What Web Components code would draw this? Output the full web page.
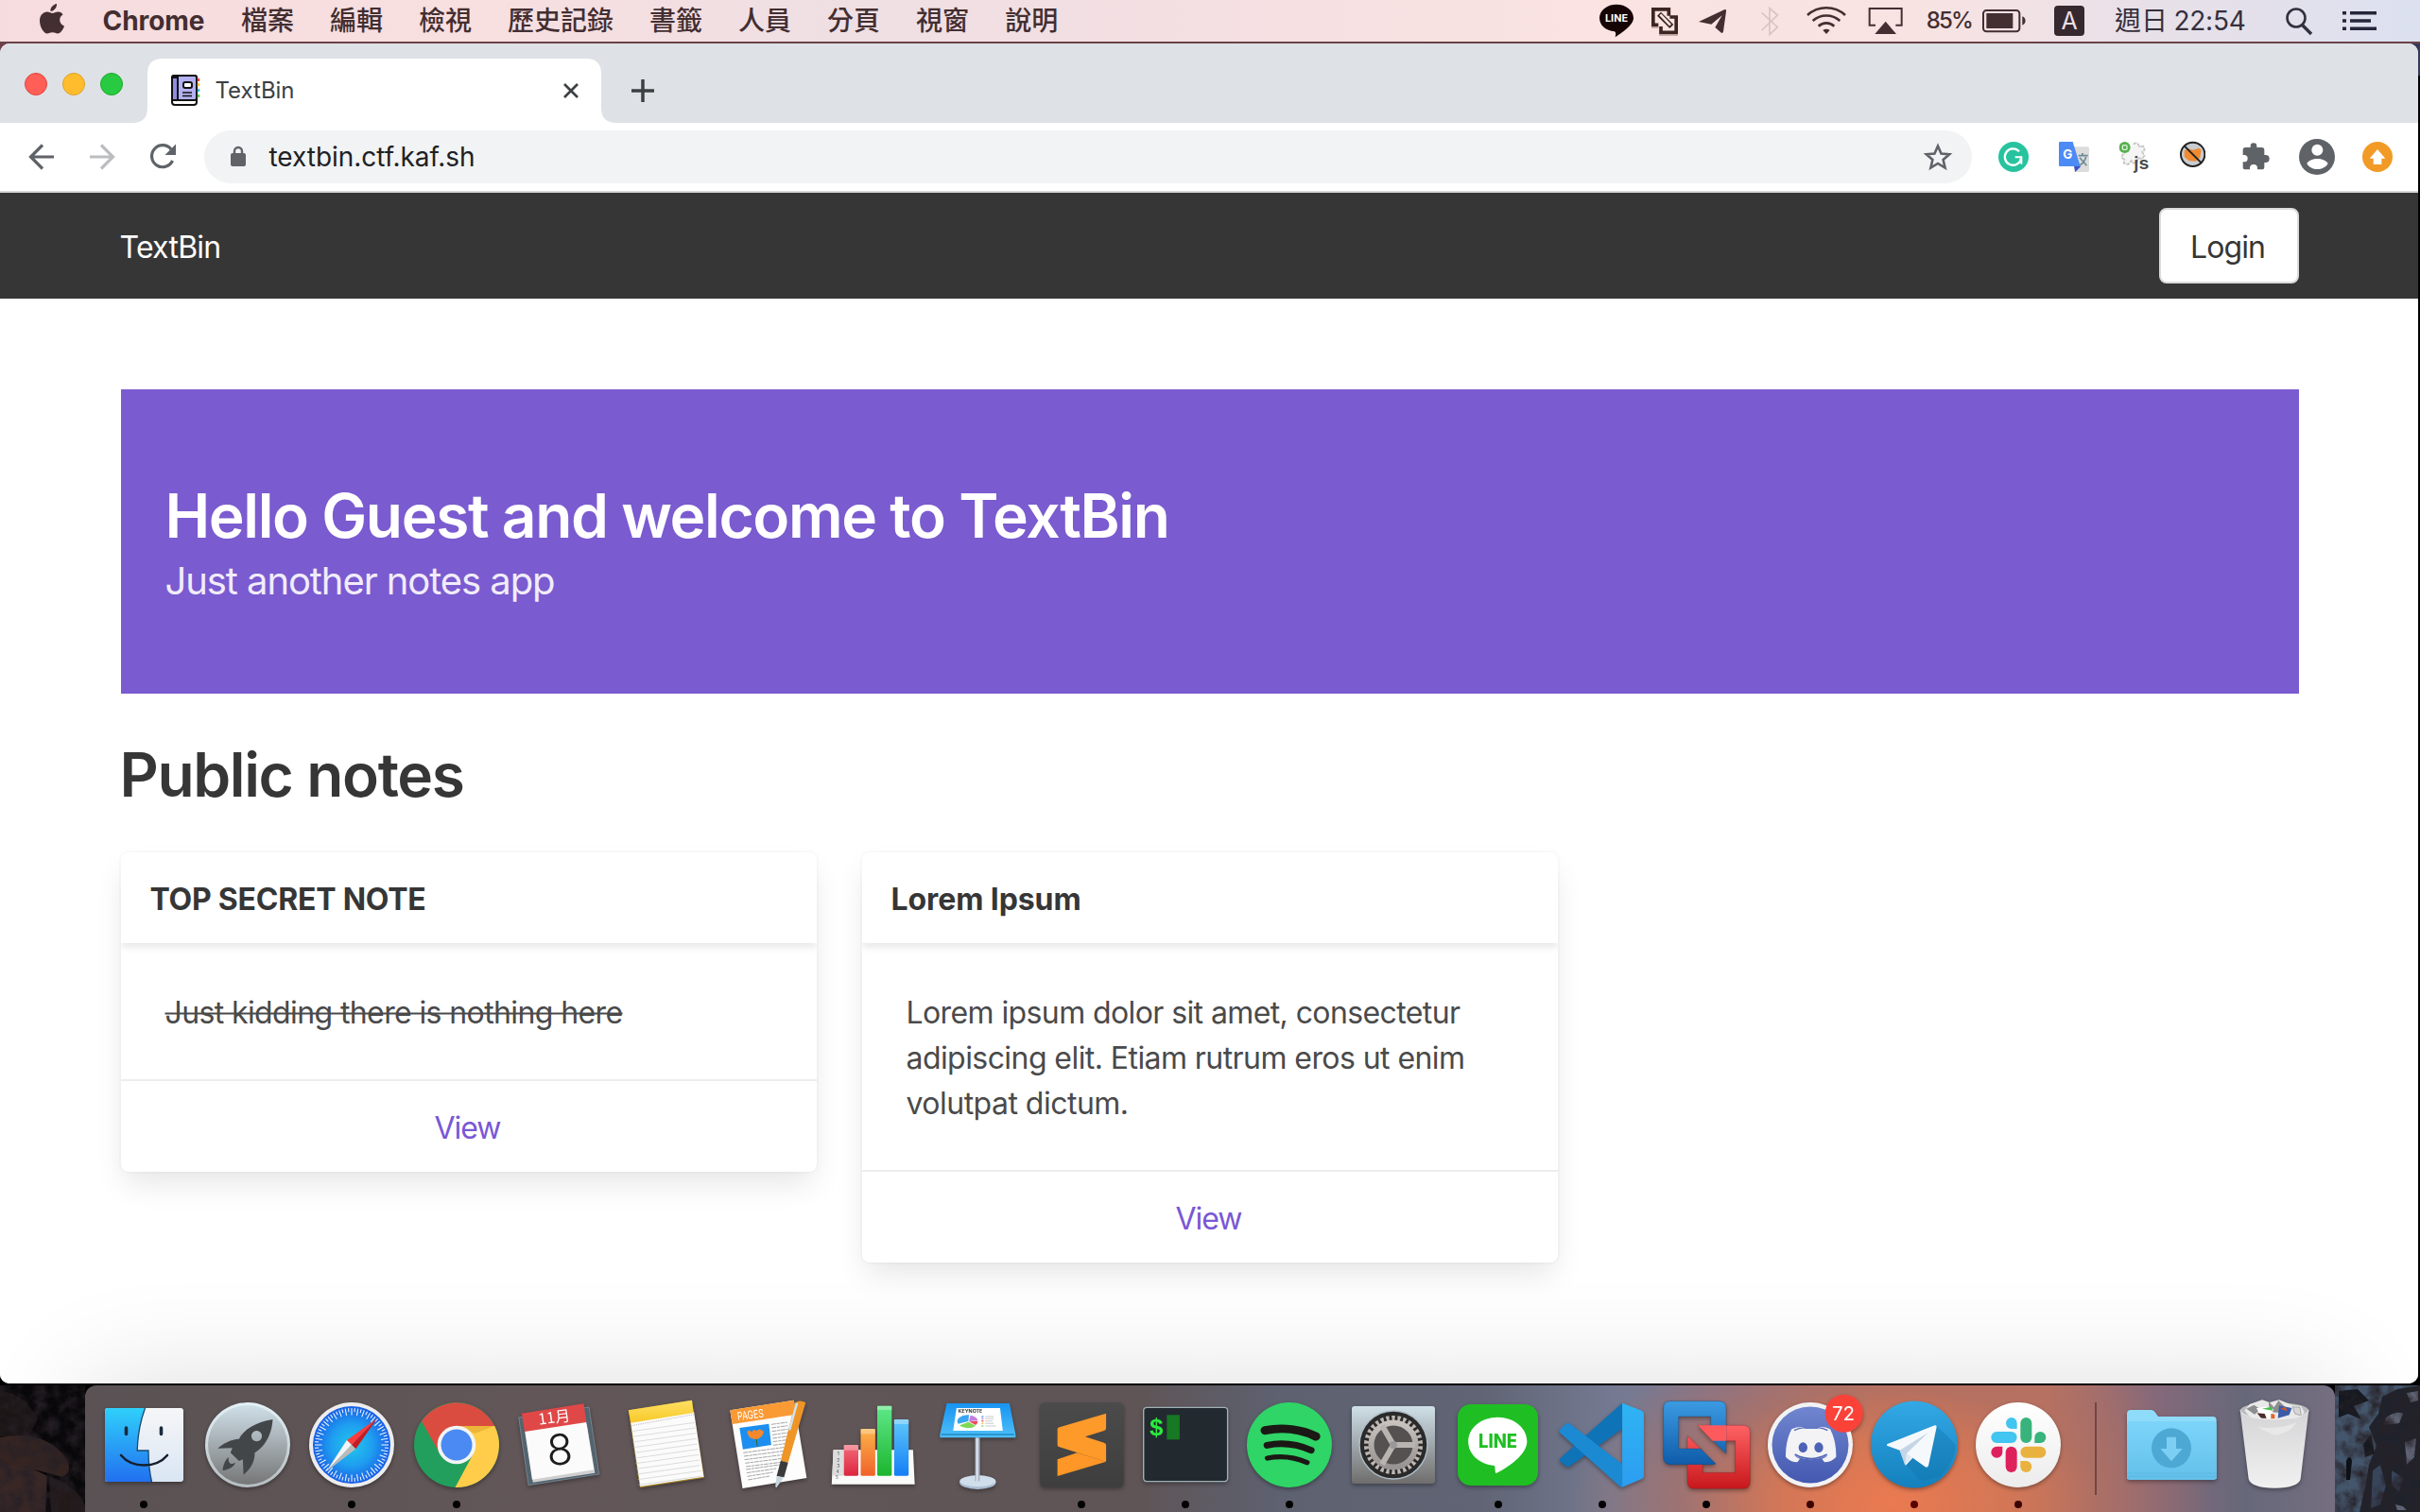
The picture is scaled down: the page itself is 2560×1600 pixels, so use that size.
<!DOCTYPE html>
<html lang="zh-Hant">
<head>
<meta charset="utf-8">
<title>TextBin</title>
<style>
html,body{margin:0;padding:0}
body{width:2560px;height:1600px;overflow:hidden;background:#0b0a0d;font-family:Inter,"Noto Sans CJK TC",sans-serif}
</style>
</head>
<body>
<mac-desktop>
  <mac-menubar slot="menubar"></mac-menubar>
  <browser-window slot="window">
    <tab-strip slot="tabs"></tab-strip>
    <tool-bar slot="toolbar"></tool-bar>
    <textbin-page>
      <note-card heading="TOP SECRET NOTE" heading-width="292">
        <fit-text w="484" strike>Just kidding there is nothing here</fit-text>
      </note-card>
      <note-card heading="Lorem Ipsum" heading-width="201">
        <fit-text w="586">Lorem ipsum dolor sit amet, consectetur</fit-text>
        <fit-text w="591">adipiscing elit. Etiam rutrum eros ut enim</fit-text>
        <fit-text w="235">volutpat dictum.</fit-text>
      </note-card>
    </textbin-page>
  </browser-window>
  <mac-dock slot="dock"></mac-dock>
</mac-desktop>

<script>
const define = (name, html, setup) => customElements.define(name, class extends HTMLElement {
  constructor(){ super(); this.attachShadow({mode:'open'}); }
  connectedCallback(){
    this.shadowRoot.innerHTML = typeof html === 'function' ? html(this) : html;
    if (setup) setup(this);
  }
});

/* One line of text tracked to a given advance width */
define('fit-text', `<style>
  :host{display:block;white-space:nowrap}
  span{display:inline-block;white-space:nowrap;transform:translate(-1.500px,var(--dy,0px))}
  :host([strike]) span{text-decoration:line-through;text-decoration-thickness:2px}
</style><span><slot></slot></span>`, el => {
  const w = +el.getAttribute('w');
  el.style.width = w + 'px';
  const fit = () => {
    const s = el.shadowRoot.querySelector('span');
    s.style.letterSpacing = '0';
    const nat = s.getBoundingClientRect().width, n = [...el.textContent.trim()].length;
    if (nat && n) s.style.letterSpacing = ((w - nat) / n) + 'px';
  };
  fit();
  requestAnimationFrame(fit);
});

define('mac-desktop', `<style>
  :host{display:flex;flex-direction:column;width:2560px;height:1600px;overflow:hidden;background:linear-gradient(90deg,#6e4148,#7a4448 60%,#37395a) 0 0/100% 80px no-repeat,#020203}
  ::slotted([slot=window]){margin-bottom:2px}
</style><slot name="menubar"></slot><slot name="window"></slot><slot name="dock"></slot>`);

/* ---------- menu bar ---------- */
const mb = (x,w,body) => `<svg width="${w/3}" height="44" viewBox="${x} 0 ${w} 132">${body}</svg>`;
define('mac-menubar', `<style>
  :host{display:flex;align-items:center;box-sizing:border-box;height:46px;flex:none;padding:0 46px 2px 42px;color:#432e31;font-size:28px;line-height:44px;
    background:linear-gradient(#0000 44px,#6a4348 44px),linear-gradient(90deg,#f6dcde 0,#f8dfe0 20%,#efdfe3 34%,#f4dfe2 50%,#fae3e1 66%,#f8e3e3 80%,#e9e0e8 88%,#dce1ef 100%)}
  svg{display:block;flex:none}
  .app{font-weight:700;margin-left:42px}
  .menus{display:flex;gap:38px;margin-left:37px;height:46px;font-weight:500;line-height:42px;font-family:"Noto Sans CJK TC",sans-serif}
  .right{display:flex;align-items:center;margin-left:auto}
  .pct{font-size:24px;font-weight:500;margin-left:26px;margin-right:1px}
  .day{height:46px;line-height:42px;font-family:"Noto Sans CJK TC",sans-serif;margin-left:31px;color:#35303c}
  .time{margin-left:8px;color:#35303c}
</style>
<svg width="26" height="44" viewBox="42 0 26 44" fill="#432e31"><path d="M60 4c.5 4-3 8-6.600 7.800C53 8 56.500 4.600 60 4zM66.500 15.500c-5 3-4 10 1.500 12-1.500 4.500-4.500 8-7 8-2 0-3-1.200-5.500-1.200S52 35.500 50 35.500c-4 0-8-7.500-8-13.500 0-6 4-9.500 7.800-9.500 2.400 0 4.200 1.500 5.700 1.500 1.400 0 3.500-1.600 6.400-1.500 2 .1 3.700 1.200 4.600 3z"/></svg>
<fit-text class="app" w="108">Chrome</fit-text>
<div class="menus"><span>檔案</span><span>編輯</span><span>檢視</span><span>歷史記錄</span><span>書籤</span><span>人員</span><span>分頁</span><span>視窗</span><span>說明</span></div>
<div class="right">
${mb(36,109,`<path fill="#160304" d="M90 14c30 0 54 19 54 43 0 17-20 36-58 61 2-9 3-15-2-18-28-3-48-20-48-43 0-24 24-43 54-43z"/><text x="90" y="70" text-anchor="middle" font-family="Inter" font-weight="700" font-size="32" textLength="72" lengthAdjust="spacingAndGlyphs" fill="#fff">LINE</text>`)}
${mb(204,85,`<g fill="none" stroke="#3d2621" stroke-width="11"><path d="M259 50V29.500H209.500V79H226"/><path d="M262 54H282.500V103H234V84"/></g><path d="M228 44L268 84" stroke="#3d2621" stroke-width="17"/><path d="M232 46L264 80" stroke="#f5e4e3" stroke-width="8"/><path d="M203 85h23v4h-23zM228 109h60v4h-60z" fill="#b89b98"/>`).replace('<svg','<svg style="margin-left:19px"')}
${mb(354,90,`<path fill="#432e31" d="M354 69 435 31c5-2 7 0 6 5l-9 64c-1 5-5 6-8 3l-18-16 22-38-34 28z"/>`).replace('<svg','<svg style="margin-left:22px"')}
${mb(551,56,`<path fill="none" stroke="#d9c3c5" stroke-width="5" d="M553 40l50 46-25 24V26l25 22-50 48"/>`).replace('<svg','<svg style="margin-left:36px"')}
${mb(696,126,`<g fill="none" stroke="#432e31" stroke-width="8"><path d="M699 48c34-31 86-31 120 0M716 66c25-22 61-22 86 0M734 83c15-13 35-13 50 0"/></g><path fill="#432e31" d="M748 96c7-5 15-5 22 0l-11 12z"/>`).replace('<svg','<svg style="margin-left:29px"')}
${mb(892,112,`<path fill="none" stroke="#432e31" stroke-width="6" d="M916 80H897V27h102v53h-19"/><path fill="#432e31" d="M948 68l34 40h-68z"/>`).replace('<svg','<svg style="margin-left:23px"')}
<fit-text class="pct" w="48">85%</fit-text>
${mb(1254,140,`<rect x="1257" y="33" width="115" height="67" rx="10" fill="none" stroke="#432e31" stroke-width="6"/><rect x="1267" y="42" width="84" height="48" fill="#432e31"/><path fill="#432e31" d="M1381 52c13 4 13 24 0 28z"/>`).replace('<svg','<svg style="margin-left:9px"')}
<svg style="margin-left:29px;margin-right:1px" width="32" height="44" viewBox="0 0 32 44"><rect y="6" width="32" height="32" rx="4" fill="#35292f"/><text x="16" y="31" text-anchor="middle" font-family="Inter" font-size="25" fill="#ecdfe6">A</text></svg>
<span class="day">週日</span><fit-text class="time" w="76">22:54</fit-text>
<svg style="margin-left:41px" width="29" height="44" viewBox="0 0 29 44"><g fill="none" stroke="#33303d" stroke-width="2.600"><circle cx="11" cy="19" r="9.500"/><path d="M17.500 26.500 27 36" stroke-width="3.400"/></g></svg>
<svg style="margin-left:31px" width="36" height="44" viewBox="0 0 36 44" fill="#25263a"><path d="M0 12h4v3.500H0zM8 12h28v3.500H8zM0 20.300h4v3.500H0zM8 20.300h22v3.500H8zM0 28.500h4V32H0zM8 28.500h28V32H8z"/></svg>
</div>`);

/* ---------- browser window ---------- */
define('browser-window', `<style>
  :host{display:flex;flex-direction:column;flex:none;width:2558px;height:1418px;border-radius:10px;overflow:hidden;background:#fff}
</style><slot name="tabs"></slot><slot name="toolbar"></slot><slot></slot>`);

define('tab-strip', `<style>
  :host{display:flex;height:84px;flex:none;background:#dee1e6}
  .lights{display:flex;gap:16px;margin:31px 0 0 26px}
  .lights i{width:24px;height:24px;box-sizing:border-box;border-radius:50%;border:1px solid #e0443e;background:#ff5f57}
  .lights i:nth-child(2){background:#ffbd2e;border-color:#dea123}
  .lights i:nth-child(3){background:#28ca41;border-color:#1aab29}
  .tab{display:flex;align-items:center;box-sizing:border-box;margin:16px 0 0 10px;width:512px;height:68px;padding:0 32px 0 40px;background:#fff;
    clip-path:path("M0 68Q16 68 16 52V16Q16 0 32 0H480Q496 0 496 16V52Q496 68 512 68Z")}
  .t{margin-left:17px;font-size:24px;color:#3c4043;--dy:-1px}
  .x{margin-left:auto;margin-right:7px}
  .plus{margin:38px 0 0 16px}
</style>
<div class="lights"><i></i><i></i><i></i></div>
<div class="tab">
<svg width="32" height="34" viewBox="0 0 32 34"><g stroke="#111" stroke-width="2"><rect x="2" y="1" width="26" height="31" rx="3" fill="#fff"/><rect x="2" y="1" width="26" height="26" rx="2" fill="#b3b1f2"/><path d="M2 3h6v24H2z" fill="#8f8de0"/><rect x="14" y="8" width="9" height="6" rx="2" fill="#fff"/><path d="M13 19h10M13 22.500h10" fill="none" stroke-width="1.500"/></g><path d="M30 4v3" stroke="#f44" stroke-width="2.500"/><path d="M30 9v3" stroke="#fc3" stroke-width="2.500"/><path d="M30 15v3" stroke="#3bd" stroke-width="2.500"/><path d="M30 21v3" stroke="#5c5" stroke-width="2.500"/></svg>
<fit-text class="t" w="84">TextBin</fit-text>
<svg class="x" width="18" height="18" viewBox="0 0 18 18"><path d="M2 2l14 14M16 2 2 16" stroke="#3c4043" stroke-width="2.700"/></svg>
</div>
<svg class="plus" width="24" height="24" viewBox="0 0 24 24"><path d="M12 0v24M0 12h24" stroke="#3c4043" stroke-width="3.500"/></svg>`);

const ext = (x,w,ml,body) => `<svg style="margin-left:${ml}px" width="${w/3}" height="72" viewBox="${x} -18 ${w} 216">${body}</svg>`;
define('tool-bar', `<style>
  :host{display:flex;align-items:flex-start;box-sizing:border-box;height:74px;flex:none;border-bottom:2px solid #d5d7da;background:#fff;padding-left:29px}
  svg{display:block;flex:none}
  .omni{display:flex;align-items:center;margin:8px 0 0 27px;width:1870px;height:56px;border-radius:28px;background:#f1f3f4}
  .url{margin-left:25px;font-size:28px;color:#202124}
  .star{margin-left:auto;margin-right:20px}
</style>
<svg width="30" height="72" viewBox="29 0 30 72"><path d="M57 36H33M45 23.500 32.500 36 45 48.500" fill="none" stroke="#5f6368" stroke-width="3.200"/></svg>
<svg style="margin-left:34px" width="30" height="72" viewBox="93 0 30 72"><path d="M95 36h24M107 23.500 119.500 36 107 48.500" fill="none" stroke="#bbbdc0" stroke-width="3.200"/></svg>
<svg style="margin-left:34px" width="32" height="72" viewBox="157 0 32 72"><path d="M181 28A11.500 11.500 0 1 0 182.500 40" fill="none" stroke="#5f6368" stroke-width="3.200"/><path d="M186 22.500V34H174.500z" fill="#5f6368"/></svg>
<div class="omni">
<svg style="margin-left:27px" width="18" height="24" viewBox="0 0 18 24"><rect x="1" y="8" width="16" height="14" rx="2" fill="#5f6368"/><path d="M5 9V6a4 4 0 0 1 8 0v3" fill="none" stroke="#5f6368" stroke-width="2.400"/></svg>
<fit-text class="url" w="218">textbin.ctf.kaf.sh</fit-text>
<svg class="star" width="32" height="32" viewBox="0 0 32 32"><path d="M16 4.500l3.500 8 8.700.8-6.600 5.700 2 8.500-7.600-4.500-7.600 4.500 2-8.500-6.600-5.700 8.700-.8z" fill="none" stroke="#5f6368" stroke-width="2.600"/></svg>
</div>
${ext(42,96,28,`<circle cx="90" cy="90" r="48" fill="#27c39f"/><path d="M108 73A26 26 0 1 0 114 95" fill="none" stroke="#fff" stroke-width="7"/><path d="M95 91h20v22" fill="none" stroke="#fff" stroke-width="6"/>`)}
${ext(234,96,32,`<path d="M280 58h45q5 0 5 5v70q0 5-5 5h-42z" fill="#dcdcdc"/><path d="M282 120h22l-18 18z" fill="#3a53c4"/><path d="M238 42h40l24 78h-64q-4 0-4-4V46q0-4 4-4z" fill="#4c8bf5"/><text x="262" y="95" text-anchor="middle" font-family="Inter" font-weight="700" font-size="40" fill="#fff">G</text><path d="M296 86h30M309 78v8M300 92l22 26M320 90q-4 18-22 28" fill="none" stroke="#6d8b95" stroke-width="5"/>`)}
${ext(426,96,32,`<path d="M470 50q8-8 16 0l4 8 12-2 4 12-8 6 8 12-8 10-14-2-2 14-14 2-4-8-10 12-14-4 2-12-8-4 2-12 8-2" fill="#f5f5f5" stroke="#c4c4c4" stroke-width="5" stroke-dasharray="12 3"/><circle cx="443" cy="60" r="18" fill="#56b04e"/><rect x="436" y="53" width="14" height="14" rx="3" fill="none" stroke="#dff2dc" stroke-width="4"/><text x="472" y="129" font-family="Inter" font-weight="600" font-size="52" textLength="48" lengthAdjust="spacingAndGlyphs" fill="#4a4a4a">js</text>`)}
${ext(618,82,32,`<circle cx="659" cy="82" r="38" fill="#c9ccd0"/><path d="M632 70l12-6 16 4 18-6 8 6-4 24-14 12-22-2-14-12z" fill="#f08b32"/><circle cx="659" cy="82" r="38" fill="none" stroke="#222" stroke-width="6"/><path d="M632 55l54 54" stroke="#222" stroke-width="6"/>`)}
${ext(816,88,39,`<path d="M826 60h16v-4a10 10 0 0 1 20 0v4h16q8 0 8 8v16h4a12 12 0 0 1 0 24h-4v14q0 8-8 8h-14v-4a12 12 0 0 0-24 0v4h-14q-8 0-8-8v-16h4a11 11 0 0 0 0-22h-4V68q0-8 8-8z" fill="#5f6368"/>`)}
${ext(993,114,30,`<circle cx="1050" cy="90" r="57" fill="#5f6368"/><circle cx="1051" cy="68" r="18" fill="#fff"/><path d="M1018 111c12-20 54-20 67 0-14 24-54 24-67 0z" fill="#fff"/>`)}
${ext(1194,96,29,`<circle cx="1242" cy="90" r="48" fill="#f29a26"/><path d="M1242 66l25 29h-12v19h-26V95h-12z" fill="#fff"/>`)}`);

/* ---------- page ---------- */
define('textbin-page', `<style>
  :host{display:block;flex:1;background:#fff;font-size:32px;line-height:48px;color:#4a4a4a;--dy:1.500px}
  nav{display:flex;align-items:center;justify-content:space-between;height:112px;padding:0 126px 0 128px;background:#363636;color:#fff}
  button{all:unset;display:flex;align-items:center;justify-content:center;box-sizing:border-box;width:148px;height:80px;border:2px solid #dbdbdb;border-radius:8px;background:#fff;color:#363636}
  main{padding:96px 126px 0 128px}
  .hero{box-sizing:border-box;height:322px;padding:98px 48px 0;background:#7a5bd0;color:#fff;--dy:-.500px}
  .title{font-size:64px;line-height:72px;font-weight:600}
  .sub{font-size:40px;line-height:50px;color:#f1ecfb;margin-top:8px}
  h2{margin:48px 0 0;font-size:64px;line-height:72px;font-weight:600;color:#363636}
  .cards{display:flex;align-items:flex-start;gap:48px;margin-top:48px}
</style>
<nav><fit-text w="107">TextBin</fit-text><button><fit-text w="79">Login</fit-text></button></nav>
<main>
<section class="hero"><fit-text class="title" w="1062">Hello Guest and welcome to TextBin</fit-text><fit-text class="sub" w="412">Just another notes app</fit-text></section>
<h2><fit-text w="364">Public notes</fit-text></h2>
<section class="cards"><slot></slot></section>
</main>`);

define('note-card', el => `<style>
  :host{display:block;width:736px;border-radius:8px;background:#fff;box-shadow:0 16px 32px -4px rgba(10,10,10,.1),0 0 0 2px rgba(10,10,10,.02)}
  header{padding:24px 32px;font-weight:700;color:#363636;box-shadow:0 4px 8px rgba(10,10,10,.1);clip-path:inset(0 0 -16px 0)}
  .body{padding:48px}
  footer{display:flex;justify-content:center;padding:24px;border-top:2px solid #ededed;color:#7957d5}
</style>
<header><fit-text w="${el.getAttribute('heading-width')}">${el.getAttribute('heading')}</fit-text></header>
<div class="body"><slot></slot></div>
<footer><fit-text w="70">View</fit-text></footer>`);

/* ---------- dock ---------- */
const g = (cx,sx,body) => `<g transform="scale(${1/sx},${1/3}) translate(${-cx},-237)">${body}</g>`;
const lg = (id,a,b) => `<linearGradient id="${id}" x1="0" y1="0" x2="0" y2="1"><stop offset="0" stop-color="${a}"/><stop offset="1" stop-color="${b}"/></linearGradient>`;
let noteLines='';for(let i=0;i<11;i++)noteLines+=`<path d="M${81+i*2.1} ${194+i*17}l187-28"/>`;
let pageLines='';for(let i=0;i<5;i++)pageLines+=`<path d="M${413+i*2} ${262+i*11}l${140-i*5} ${-20+i}"/>`;
for(let i=0;i<4;i++)pageLines+=`<path d="M${421+i*2} ${315+i*11}l${100-i*12} ${-15+i}"/>`;
for(let i=0;i<7;i++)pageLines+=`<path d="M${496+i} ${172+i*11}l48-7"/>`;
let teeth='';for(let i=0;i<30;i++)teeth+=`<path d="M-2-31h4l-1 6h-2z" transform="rotate(${i*12})"/>`;
let ticks='';for(let i=0;i<72;i++)ticks+=`<path d="M0-39v${i%2?4:7.500}" transform="rotate(${i*5})"/>`;
const icons = {
finder:`<defs>${lg('a','#2fd0fb','#2270f0')}${lg('b','#f6f6f8','#d9e6f3')}</defs><rect x="-41" y="-39" width="83" height="78" rx="3" fill="url(#b)"/><path d="M-38-39H1.500C-4-24-6.500-8-6.800 6H5c0 12 1 22 3.500 33H-38q-3 0-3-3V-36q0-3 3-3z" fill="url(#a)"/><path d="M1.500-39C-4-24-6.500-8-6.800 6H5c0 12 1 22 3.500 33" fill="none" stroke="#17496e" stroke-width="1.300"/><path d="M-18.500-18v6.500M18.500-18v6.500" stroke="#1b2a3c" stroke-width="3.600" stroke-linecap="round"/><path d="M-24 11C-12 25 13 25 25 11" fill="none" stroke="#14202e" stroke-width="2.600" stroke-linecap="round"/>`,
launchpad:`<defs>${lg('a','#cfdfe8','#767676')}${lg('b','#e4f2f8','#b4bcc0')}</defs><circle r="45" fill="url(#b)"/><circle r="42" fill="url(#a)"/>`+g(463,2.529,`<path fill="#434649" fill-rule="evenodd" d="M530 156C485 165 452 188 440 218 415 220 395 235 383 248L422 247 417 262 440 288 450 283 452 332C472 312 482 290 482 262 512 240 528 200 530 156zM487 192a14 17 0 1 0 .1 0z"/><path fill="#434649" d="M412 276C402 286 398 300 396 318 412 315 426 308 430 293 418 302 410 296 412 276z"/>`),
safari:`<defs><radialGradient id="a"><stop offset="0" stop-color="#22c8ea"/><stop offset=".55" stop-color="#1e9df0"/><stop offset="1" stop-color="#1a5fe6"/></radialGradient></defs><circle r="45" fill="#ededed"/><circle r="41" fill="url(#a)"/><g stroke="#e8f4fd" stroke-width="1.100">${ticks}</g>`+g(742,2.529,`<path fill="#ff3b3b" d="M810 153L729 222 742 237z"/><path fill="#c91920" d="M810 153L753 250 742 237z"/><path fill="#f4f4f4" d="M674 322L729 222 742 237z"/><path fill="#bdb9b7" d="M674 322L753 250 742 237z"/>`),
chrome:`<circle r="45" fill="#229f5d"/><path d="M0-20H40.300A45 45 0 0 1-1.500 45L17.300 10z" fill="#ffcd4a"/><path d="M40.300-20A45 45 0 0 0-37-25L-17.300 10 0-20z" fill="#db4c40"/><path d="M4-20h36l-21 8z" fill="#e0a730" opacity=".6"/><circle r="20.300" fill="#f4f4f4"/><circle r="16.500" fill="#4a8af2"/>`,
calendar:g(1298,2.529,`<path d="M1186 150L1374 117 1401 330 1212 365z" fill="#53646f" stroke="#8195a0" stroke-width="2"/><path d="M1206 200L1368 170 1390 326 1224 356z" fill="#cfcfcf"/><path d="M1202 190L1366 160 1387 316 1222 347z" fill="#fbfbfb"/><path d="M1194 137L1360 106 1367 165 1202 195z" fill="#e04848"/>`)+`<text transform="translate(-6 -23.500) rotate(-8)" text-anchor="middle" font-family="Noto Sans CJK TC" font-size="16" fill="#fff">11月</text><text transform="translate(0 21) rotate(-3)" text-anchor="middle" font-family="Inter" font-weight="300" font-size="45" fill="#1c1c1c">8</text>`,
notes:g(179,2.8,`<defs>${lg('a','#ffe063','#f7c928')}</defs><path d="M72 127L260 95 297 341 106 373z" fill="#a88a2a"/><path d="M78 160L266 132 295 338 107 369z" fill="#fbfbfb"/><path d="M72 127L260 95 265 135 79 167z" fill="url(#a)"/><path d="M81 176l186-36" stroke="#999" stroke-width="2.500" stroke-dasharray="2 3"/><g stroke="#c8c8c8" stroke-width="1.800">${noteLines}</g>`),
pages:g(488,2.8,`<path d="M374 127L563 95 601 342 411 375z" fill="#fdfdfd"/><path d="M374 127L563 95 570 140 381 171z" fill="#fa9a34"/><path d="M402 183L489 170 496 237 412 251z" fill="#1c8ef0"/><path d="M424 195q8-8 14 2 6-14 14-4 10-12 22 2-4 18-20 24-18 0-24-8z" fill="#f5882c"/><path d="M452 219l3 24" stroke="#396b1e" stroke-width="3"/><g stroke="#9a9a9a" stroke-width="2.600" stroke-dasharray="14 2 9 2">${pageLines}</g><path d="M567 103Q580 92 598 103L546 293 524 287z" fill="#ee9526"/><path d="M572 104L550 190" stroke="#cfe3f2" stroke-width="7"/><path d="M524 287L546 293 534 340 512 336z" fill="#3b3b3e"/><path d="M512 336L532 341 512 372 508 370z" fill="#c7d6dd"/>`)+`<text transform="translate(-32.500 -26) rotate(-7)" font-family="Inter" font-size="12" textLength="28" lengthAdjust="spacingAndGlyphs" fill="#fff">PAGES</text>`,
numbers:g(796,2.8,`<defs>${lg('r','#f36b78','#dd2540')}${lg('o','#fbb44a','#f0622a')}${lg('gr','#5fe88a','#1db52f')}${lg('bl','#5fc8fb','#147ef5')}</defs><path d="M680 253H916L921 362H675z" fill="#fafafa"/><path d="M680 253H710V335H677z" fill="#dcdcdc"/><g font-family="Inter" font-size="14" fill="#555"><text x="692" y="271">1</text><text x="690" y="290">2</text><text x="690" y="308">3</text><text x="688" y="327">4</text><text x="687" y="345">5</text></g><rect x="711" y="237" width="43" height="98" rx="4" fill="url(#r)"/><rect x="761" y="186" width="43" height="149" rx="4" fill="url(#o)"/><rect x="810" y="113" width="43" height="222" rx="4" fill="url(#gr)"/><rect x="860" y="156" width="43" height="179" rx="4" fill="url(#bl)"/><g fill="#fff" opacity=".3"><rect x="711" y="237" width="43" height="17"/><rect x="761" y="186" width="43" height="16"/><rect x="810" y="113" width="43" height="13"/><rect x="860" y="156" width="43" height="15"/></g>`),
keynote:g(1105,2.8,`<defs>${lg('a','#1794f3','#4fc0f8')}</defs><ellipse cx="1106" cy="356" rx="54" ry="22" fill="#aabdd2"/><ellipse cx="1106" cy="352" rx="53" ry="18" fill="#cfdeea"/><path d="M1098 214h14v138h-14z" fill="#aab6c4"/><path d="M1102 214h4v138h-4z" fill="#e8eff5"/><path d="M1014 105H1200L1218 204V214H994V204z" fill="url(#a)"/><path d="M998 204H1214" stroke="#0d6fae" stroke-width="3"/><path d="M1043 120H1172L1180 192H1033z" fill="#fff"/><text x="1048" y="134" font-family="Inter" font-weight="700" font-size="14" textLength="72" lengthAdjust="spacingAndGlyphs" fill="#333">KEYNOTE</text><path d="M1078 162L1048 170A30 20 0 0 1 1080 142z" fill="#3aa6f2"/><path d="M1080 162L1084 143A28 20 0 0 1 1106 160z" fill="#c77be0"/><path d="M1080 163L1106 161A28 20 0 0 1 1100 174z" fill="#ee4a5a"/><path d="M1078 164L1100 176A30 20 0 0 1 1052 175z" fill="#7ed957"/><g stroke-width="4"><path d="M1117 147h6" stroke="#3aa6f2"/><path d="M1117 154h6" stroke="#c77be0"/><path d="M1117 161h6" stroke="#ee4a5a"/><path d="M1117 169h6" stroke="#f6c842"/><path d="M1117 177h6" stroke="#7ed957"/></g><path d="M1128 147h25M1128 154h25M1128 161h22M1128 169h25M1128 177h32" stroke="#ccc" stroke-width="3"/>`),
sublime:g(1413,2.8,`<defs>${lg('a','#4b4b4b','#3e3e3e')}</defs><rect x="1290" y="103" width="248" height="268" rx="14" fill="url(#a)"/><path d="M1342 283L1400 262 1486 290 1342 336z" fill="#fe9727"/><path d="M1400 262L1486 290 1440 262z" fill="#d9791a"/><path d="M1342 187Q1342 183 1348 181L1486 137V184Q1486 190 1480 192L1424 211 1480 230Q1486 232 1486 238V290L1346 243Q1342 241 1342 238z" fill="#fe9a2a"/>`),
terminal:g(210,2.8,`<rect x="86" y="118" width="249" height="235" rx="10" fill="#222a30" stroke="#9fb0b4" stroke-width="4"/><rect x="155" y="142" width="38" height="78" fill="#177923"/>`)+`<text x="-38.500" y="-10" font-family="Liberation Mono" font-weight="700" font-size="26" fill="#2bea3e">$</text>`,
spotify:`<circle r="45" fill="#2fd566"/>`+g(519,2.8,`<g fill="none" stroke="#1b1815" stroke-linecap="round"><path d="M447 191C500 180 555 188 597 210" stroke-width="27"/><path d="M453 238C500 228 545 236 583 254" stroke-width="21"/><path d="M454 279C497 270 535 276 571 293" stroke-width="16"/></g>`),
prefs:`<defs>${lg('a','#cfe0e8','#6f6d6c')}${lg('b','#c9c3bf','#989390')}</defs><rect x="-44" y="-41" width="88" height="82" rx="3" fill="url(#a)"/><circle r="36" fill="#2b2a2a" stroke="#aebcc6" stroke-width="1.500"/><g fill="#bdb7b3">${teeth}</g><circle r="23.500" fill="#555150" stroke="url(#b)" stroke-width="6"/><path d="M0 0H23M0 0-12-20.500M0 0-12 20.500" stroke="#b9b4b0" stroke-width="6"/><circle r="4" fill="#999"/>`,
line:`<rect x="-43" y="-43" width="85" height="86" rx="14" fill="#1fbf23"/>`+g(1136,2.8,`<path d="M1134 149C1182 149 1221 183 1221 226 1221 262 1180 300 1130 327 1125 328 1128 306 1124 303 1080 298 1047 268 1047 226 1047 183 1086 149 1134 149z" fill="#fff"/>`)+`<text x="-.5" y="3" text-anchor="middle" font-family="Inter" font-weight="800" font-size="20" textLength="41" lengthAdjust="spacingAndGlyphs" fill="#1fbf23">LINE</text>`,
vscode:g(1444,2.8,`<defs>${lg('a','#2fb4f4','#2c9df0')}</defs><path d="M1503 104V186L1350 303Q1342 309 1335 303L1320 290Q1314 283 1322 277z" fill="#0f73b8"/><path d="M1318 198Q1314 190 1321 185L1335 171Q1342 165 1350 171L1503 298V371Q1498 372 1494 367z" fill="#1c89d3"/><path d="M1503 104L1561 128Q1567 132 1567 138V336Q1567 342 1561 345L1503 371z" fill="url(#a)"/>`),
vmware:g(258,3,`<defs>${lg('a','#3b9be2','#0f5caa')}${lg('b','#ff6264','#c7181c')}</defs><path d="M232 175H375Q397 175 397 197V353Q397 376 375 376H221Q198 376 198 353V208L247 255V325H350V224H278z" fill="url(#b)" stroke="#7a1e20"/><path d="M144 98H299Q321 98 321 120V265L272 217V147H170V249H240L288 297Q286 299 282 299H144Q122 299 122 277V120Q122 98 144 98z" fill="url(#a)" stroke="#0b3c6c"/><path d="M232 175H321V224H278z" fill="#fd5a5d"/>`),
discord:`<defs>${lg('a','#7086cf','#4459b0')}</defs><circle r="45" fill="#f2f2f4"/><circle r="40.500" fill="url(#a)"/>`+g(589,3,`<path d="M530 187Q548 178 568 180L572 186H612L616 180Q636 178 652 187 672 225 671 275 656 292 634 292L626 281Q640 277 644 270 590 296 538 270 544 277 556 281L548 292Q526 292 511 275 510 225 530 187z" fill="#f3f3f5"/><path d="M538 191Q552 184 572 182M644 191Q630 184 612 182" fill="none" stroke="#5468b8" stroke-width="4"/><ellipse cx="566" cy="245" rx="14" ry="16" fill="#4e63b6"/><ellipse cx="616" cy="245" rx="14" ry="16" fill="#4e63b6"/><path d="M540 267Q590 294 642 267" fill="none" stroke="#4e63b6" stroke-width="5"/><circle cx="696" cy="137" r="60" fill="#fb4239"/>`)+`<text x="35" y="-26" text-anchor="middle" font-family="Inter" font-size="20.500" fill="#fff">72</text>`,
telegram:`<defs>${lg('a','#33a9e6','#1380bd')}</defs><circle r="46" cy="-.5" fill="url(#a)"/>`+g(919,3,`<path d="M990 177L1050 235Q1050 290 1000 340L940 350 893 300z" fill="#1272aa" opacity=".35"/><path d="M834 234L984 175Q990 173 990 180L964 303Q961 311 954 307L914 278 892 302 873 254 834 240Q829 237 834 234z" fill="#f5f9fc"/><path d="M873 254L963 198 895 264 890 303z" fill="#c3d5e6"/><path d="M895 264L890 301 914 278z" fill="#dfeaf3"/>`),
slack:`<defs>${lg('a','#fff','#ececec')}</defs><circle r="45" fill="url(#a)"/>`+g(1250,3,`<g fill="#42c5f0"><rect x="1164" y="195" width="82" height="36" rx="18"/><path d="M1246 186V168A17.500 18 0 1 0 1228 186z"/></g><g fill="#38b37c"><rect x="1257" y="150" width="36" height="81" rx="18"/><path d="M1302 231V213A18 18 0 1 1 1320 231z"/></g><g fill="#de205c"><path d="M1200 242V260A18 18 0 1 1 1182 242z"/><rect x="1210" y="242" width="36" height="82" rx="18"/></g><g fill="#e9b23f"><rect x="1257" y="242" width="81" height="36" rx="18"/><path d="M1257 288V306A18 18 0 1 0 1275 288z"/></g>`),
folder:g(531,3,`<defs>${lg('a','#7cd4f9','#64c0ea')}</defs><path d="M390 138Q390 126 402 126H466Q474 126 479 133L489 147H662Q674 147 674 158V345H390z" fill="#8edcfa"/><path d="M390 174Q390 162 402 162H662Q674 162 674 174V340Q674 348 666 348H398Q390 348 390 340z" fill="url(#a)"/><path d="M390 327H674M390 337H674" stroke="#4faedb" stroke-width="1.500"/><circle cx="531" cy="247" r="63" fill="#4da8d4"/><path d="M516 212h30v37h20l-35 40-35-40h20z" fill="#7ccff3"/>`),
trash:g(864,3,`<defs>${lg('a','#d9d9db','#f6f6f6')}</defs><ellipse cx="861" cy="128" rx="109" ry="26" fill="#b9babd"/><path d="M766 128l16-20 40-14 24 8 30-8 40 16 30 4 10 20-20 22H790z" fill="#e9e9e9"/><path d="M772 122l24-12 22 14-20 16zM842 98l18 20 14-22 22 22-10 18-40-4z" fill="#8d8d90"/><path d="M804 120l30-4 24 8-10 30-28-2z" fill="#fff"/><path d="M822 122l30-6 4 12z" fill="#49c04c"/><path d="M806 136l24 2 6 14-16 2z" fill="#4a2a2a"/><path d="M876 112l40 8-8 22-36 10z" fill="#3a5ba6"/><path d="M880 122l16-6 6 14z" fill="#d0562e"/><path d="M850 138l12 2v14h-12z" fill="#e0662e"/><path d="M918 116l24 2 4 26-20-6z" fill="#d6d6d8" stroke="#8d8d90" stroke-width="2"/><path d="M752 126Q760 152 861 156 962 152 970 126L944 345Q938 373 861 374 786 373 779 345z" fill="url(#a)" opacity=".97"/><path d="M752 126Q760 152 861 156 962 152 970 126" fill="none" stroke="#f2f2f2" stroke-width="2"/><path d="M805 180Q880 190 930 165 915 200 860 206z" fill="#eee" opacity=".7"/>`)
};
define('dock-icon', el => `<style>
  :host{display:flex;flex-direction:column;align-items:center;width:110.200px;height:134px;flex:none}
  svg{display:block;overflow:visible;filter:drop-shadow(0 2px 2px rgba(0,0,0,.35))}
  i{width:8px;height:8px;border-radius:50%;margin-top:-4px;background:var(--dot,#000)}
</style>
<svg width="110" height="126" viewBox="-55 -63 110 126">${icons[el.getAttribute('name')]}</svg>${el.hasAttribute('running')?'<i></i>':''}`);

define('mac-dock', `<style>
  :host{display:flex;height:134px;flex:none}
  .side{width:90px;height:134px;flex:none}
  .side svg{display:block}
  .shelf{display:flex;box-sizing:border-box;width:2380px;height:134px;padding-left:7px;border-radius:12px 12px 0 0;box-shadow:0 0 120px rgba(0,0,0,.14);
    background:radial-gradient(ellipse 340px 190px at 1910px 124px,#ea7a50 0,#d67755ee 35%,#b4705f99 65%,#b4705f00 100%),linear-gradient(90deg,#5a5254 0,#625658 20%,#5f5557 40%,#5f5557 47%,#5d6170 53%,#606474 62%,#747a92 68%,#85758a 73%,#b27064 80%,#b97263 87%,#85697a 92%,#66687a 96%,#746e80 100%)}
  hr{width:2px;height:98px;margin:18px 24px 0 25px;border:0;background:#704545}
</style>
<div class="side"><svg width="90" height="134" viewBox="0 0 90 134"><defs><filter id="n" x="0" y="0" width="100%" height="100%"><feTurbulence type="fractalNoise" baseFrequency=".08" numOctaves="4" seed="4"/><feColorMatrix values="0 0 0 0 .02  0 0 0 0 .015  0 0 0 0 .02  1.800 0 0 0 -.6"/></filter></defs><rect width="90" height="134" fill="#09080a"/><path d="M0 6Q26 8 40 36L30 54H0z" fill="#1c1617"/><path d="M0 55Q50 46 72 80 76 94 66 97L40 90 0 86z" fill="#362523"/><path d="M0 84Q30 84 50 96L48 134H0z" fill="#3a2827"/><path d="M52 96Q84 108 90 128V134H54z" fill="#231a1a"/><rect width="90" height="134" filter="url(#n)"/></svg></div>
<div class="shelf">
<dock-icon name="finder" running></dock-icon><dock-icon name="launchpad"></dock-icon><dock-icon name="safari" running></dock-icon><dock-icon name="chrome" running></dock-icon><dock-icon name="calendar"></dock-icon><dock-icon name="notes"></dock-icon><dock-icon name="pages"></dock-icon><dock-icon name="numbers"></dock-icon><dock-icon name="keynote"></dock-icon><dock-icon name="sublime" running></dock-icon><dock-icon name="terminal" running></dock-icon><dock-icon name="spotify" running></dock-icon><dock-icon name="prefs"></dock-icon><dock-icon name="line" running></dock-icon><dock-icon name="vscode" running></dock-icon><dock-icon name="vmware" running></dock-icon><dock-icon name="discord" running style="--dot:#3c0303"></dock-icon><dock-icon name="telegram" running style="--dot:#5a0000"></dock-icon><dock-icon name="slack" running style="--dot:#3c0303"></dock-icon>
<hr>
<dock-icon name="folder"></dock-icon><dock-icon name="trash"></dock-icon>
</div>
<div class="side"><svg width="90" height="134" viewBox="0 0 90 134"><defs><filter id="n" x="0" y="0" width="100%" height="100%"><feTurbulence type="fractalNoise" baseFrequency=".09 .06" numOctaves="4" seed="9"/><feColorMatrix values="0 0 0 0 .08  0 0 0 0 .09  0 0 0 0 .12  9 0 0 0 -5.200"/></filter></defs><rect width="90" height="134" fill="#44566c"/><path d="M36 44L46 30 50 12 66 4 90 0V134H26L32 108 36 84 44 64z" fill="#20222b"/><path d="M4 6l20-2 12 12-16 6 8 14-14-6-10 4zM30 62l8-10 4 20-10 4z" fill="#15181f"/><path d="M54 34q12-8 18-4l-4 10-16 2zM74 60l12-4-2 20-8 8zM64 126l8 2 4 4h-10zM76 8l12-2v10l-8 2z" fill="#5e6273"/><path d="M40 90l8-6 6 22-6 20-10 4zM60 90l12 8-4 14-8-6z" fill="#38445a"/><rect width="90" height="134" filter="url(#n)"/><path d="M12 80q4-8 6 0l-2 20h-4z" fill="#0d1016"/></svg></div>`);
</script>
</body>
</html>
